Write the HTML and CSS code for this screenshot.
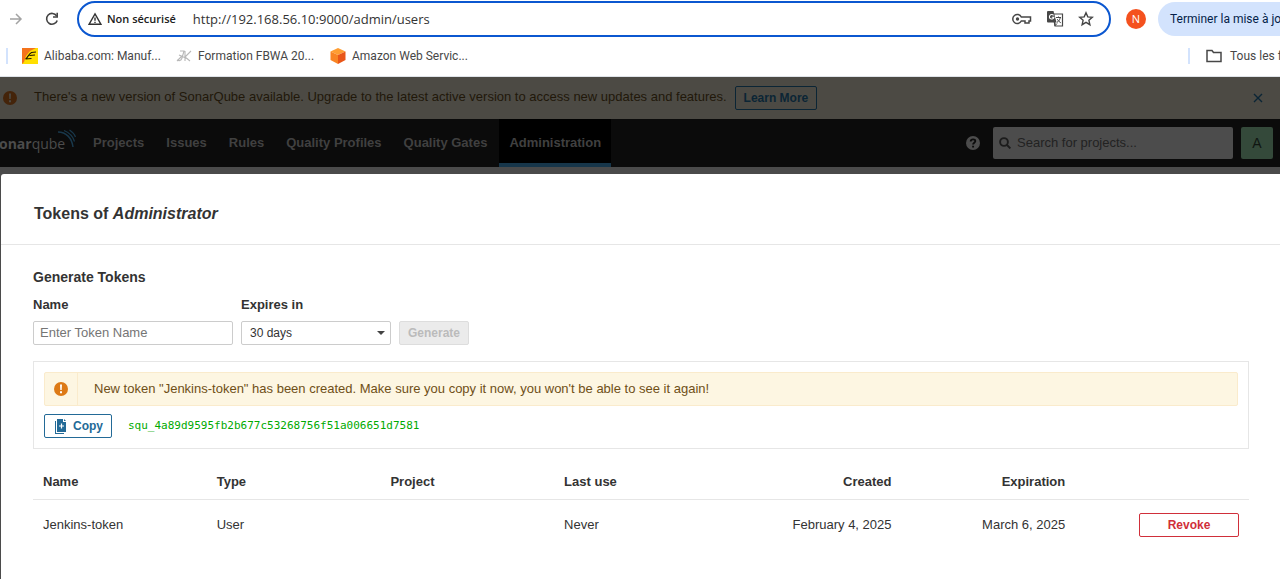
FILE: index.html
```html
<!DOCTYPE html>
<html lang="en">
<head>
<meta charset="utf-8">
<meta name="viewport" content="width=device-width, initial-scale=1">
<title>Users - Administration</title>
<link rel="stylesheet" href="styles.css">
</head>
<body>
<header class="browser">
  <div class="toolbar">
    <button class="icon-btn forward" aria-label="Forward"><svg width="16" height="16" viewBox="0 0 16 16" fill="none" stroke="#a3a3a3" stroke-width="1.5"><path d="M2 8h11M8 3l5 5-5 5"/></svg></button>
    <button class="icon-btn reload" aria-label="Reload"><svg width="16" height="16" viewBox="0 0 16 16"><path d="M12.6 4.9A5.4 5.4 0 1 0 13.2 9.4" fill="none" stroke="#444" stroke-width="1.6"/><path d="M14 1.8v5H9V5.300h3.400V1.800z" fill="#444"/></svg></button>
    <div class="address">
      <svg width="14" height="14" viewBox="0 0 14 14" fill="none" stroke="#333" stroke-width="1.400"><path d="M7 1.800 13 12.300H1z"/><path d="M7 5.500v3.300M7 9.800v1.200"/></svg>
      <span class="insecure">Non sécurisé</span>
      <input class="url" aria-label="Address" value="http://192.168.56.10:9000/admin/users">
      <button class="icon-btn" aria-label="Passwords"><svg width="20" height="14" viewBox="0 0 20 14" fill="none" stroke="#474747" stroke-width="1.500"><path d="M9.300 5A4.500 4.500 0 1 0 9.300 9H13v2h4V9h1.500V5z"/><circle cx="5.500" cy="7" r="1.700" fill="#474747" stroke="none"/></svg></button>
      <button class="icon-btn" aria-label="Translate"><svg width="18" height="18" viewBox="0 0 18 18"><path d="M7 4h9.500v12H9z" fill="#fff" stroke="#474747" stroke-width="1.200"/><path d="M2 1h5.500l3 11.500H2a1 1 0 0 1-1-1V2a1 1 0 0 1 1-1z" fill="#474747"/><path d="M7.600 5.400A2.300 2.300 0 1 0 8 7.200H5.800" fill="none" stroke="#fff" stroke-width="1.100"/><path d="M10 7.500h5M12.500 6.500v1M14.300 7.500c-.4 2.500-1.800 4-3.500 5M11.300 9.200c.8 1.600 2 2.700 3.500 3.600M9 12.500v3.200l2-2.200" fill="none" stroke="#474747" stroke-width="1"/></svg></button>
      <button class="icon-btn" aria-label="Bookmark"><svg width="16" height="16" viewBox="0 0 16 16" fill="none" stroke="#444" stroke-width="1.400"><path d="m8 1.800 1.800 4.100 4.500.4-3.400 3 1 4.400L8 11.400l-3.900 2.300 1-4.400-3.400-3 4.500-.4z"/></svg></button>
    </div>
    <button class="profile" aria-label="Profile">N</button>
    <button class="update">Terminer la mise à jour</button>
  </div>
  <nav class="bookmarks" aria-label="Bookmarks">
    <span class="divider"></span>
    <a href="#" class="bookmark"><svg width="16" height="16" viewBox="0 0 16 16"><path fill="#ffdf00" d="M0 0h16v16H0z"/><path d="M0 0h14L8 3 4 8 2 14 0 16z" fill="#f4731c"/><path d="M3.500 11c2-1 3-5 6-6.500L14 4M7.500 7.500 13 7M3.500 11l6-.5" fill="none" stroke="#201500" stroke-width="1.100"/></svg>Alibaba.com: Manuf...</a>
    <a href="#" class="bookmark"><svg width="16" height="16" viewBox="0 0 16 16" fill="none" stroke="#b8b8b8" stroke-width="1.100"><path d="M4 3h4l-2 7c-1 3-3 3-5 2M9 3v10M15 3 9 9l5 4M3 7l9 4M1 13l5-5"/></svg>Formation FBWA 20...</a>
    <a href="#" class="bookmark"><svg width="16" height="16" viewBox="0 0 16 16"><path fill="#ff9d32" d="m8 0 7.500 3.500L8 7 .5 3.500z"/><path fill="#f98424" d="M.5 3.500 8 7v9L.5 12z"/><path fill="#e95618" d="M15.500 3.500 8 7v9l7.500-4z"/></svg>Amazon Web Servic...</a>
    <span class="spacer"></span>
    <span class="divider"></span>
    <a href="#" class="bookmark all"><svg width="16" height="14" viewBox="0 0 16 14" fill="none" stroke="#474747" stroke-width="1.500"><path d="M1 1.500h5l1.500 2H15v9H1z"/></svg>Tous les favoris</a>
  </nav>
</header>

<div class="banner">
  <svg class="banner-icon" width="14" height="14" viewBox="0 0 14 14"><circle cx="7" cy="7" r="7" fill="#44240a"/><path d="M6 2.500h2L7.700 8H6.300zM6 9.300h2v2H6z" fill="#4c4a44"/></svg>
  <span class="banner-text">There's a new version of SonarQube available. Upgrade to the latest active version to access new updates and features.</span>
  <button class="btn learn">Learn More</button>
  <button class="icon-btn close" aria-label="Dismiss"><svg width="10" height="10" viewBox="0 0 10 10" stroke="#0b2535" stroke-width="1.400"><path d="m1 1 8 8M9 1 1 9"/></svg></button>
</div>

<div class="navbar">
  <a href="#" class="brand" aria-label="SonarQube"><span class="brand-name"><b>sonar</b>qube</span><svg width="20" height="20" viewBox="0 0 20 20" fill="none" stroke="#19384b"><path d="M1 3c8 0 14 6 15 15" stroke-width="1.500"/><path d="M7 1.500c5 2 9 6 10.500 11M12.500 1c3 2 5 4 6 7" stroke-width="1.200"/></svg></a>
  <nav class="menu" aria-label="Main">
    <a href="#">Projects</a><a href="#">Issues</a><a href="#">Rules</a><a href="#">Quality Profiles</a><a href="#">Quality Gates</a><a href="#" class="active">Administration</a>
  </nav>
  <button class="icon-btn help" aria-label="Help"><svg width="14" height="14" viewBox="0 0 14 14"><circle cx="7" cy="7" r="7" fill="#4c4c4c"/><path d="M4.700 5.500C4.800 2.600 9.500 2.700 9.300 5.300 9.200 6.700 7.100 6.800 7.100 8.500M7.100 9.700v1.900" fill="none" stroke="#0b0b0b" stroke-width="1.900"/></svg></button>
  <label class="search"><svg width="12" height="12" viewBox="0 0 12 12" fill="none" stroke="#1c1c1c" stroke-width="1.900"><circle cx="5" cy="5" r="3.900"/><path d="m8 8 3.400 3.400"/></svg><input type="search" aria-label="Search for projects" placeholder="Search for projects..."></label>
  <button class="avatar">A</button>
</div>

<div class="backdrop">
  <main class="modal" role="dialog" aria-labelledby="title">
    <header class="modal-head"><h1 id="title">Tokens of <em>Administrator</em></h1></header>
    <div class="modal-body">
      <h2>Generate Tokens</h2>
      <form class="form">
        <div class="field name"><label for="token-name">Name</label><input id="token-name" placeholder="Enter Token Name"></div>
        <div class="field expires"><label for="expires">Expires in</label>
          <div class="select-wrap"><select id="expires"><option>30 days</option></select></div></div>
        <button class="btn generate" disabled>Generate</button>
      </form>
      <section class="panel">
        <div class="alert">
          <div class="alert-icon"><svg width="14" height="14" viewBox="0 0 14 14"><circle cx="7" cy="7" r="7" fill="#dd7a16"/><path d="M6 2.500h2L7.700 8H6.300zM6 9.300h2v2H6z" fill="#fff"/></svg></div>
          <p>New token "Jenkins-token" has been created. Make sure you copy it now, you won't be able to see it again!</p>
        </div>
        <div class="token">
          <button class="btn copy"><svg width="14" height="16" viewBox="0 0 14 16"><path d="M4 1h6v3h3v10H4z" fill="#236a97"/><path d="M11 1l2 2h-2zM2 3h1v12h8v1H2z" fill="#236a97"/><path d="M8.500 5.500v5M6 8h5" stroke="#fff" stroke-width="1.200"/></svg>Copy</button>
          <code>squ_4a89d9595fb2b677c53268756f51a006651d7581</code>
        </div>
      </section>
      <table>
        <thead><tr><th>Name</th><th>Type</th><th>Project</th><th>Last use</th><th class="num">Created</th><th class="num">Expiration</th><th></th></tr></thead>
        <tbody><tr><td>Jenkins-token</td><td>User</td><td></td><td>Never</td><td class="num">February 4, 2025</td><td class="num">March 6, 2025</td><td class="num"><button class="btn revoke">Revoke</button></td></tr></tbody>
      </table>
    </div>
  </main>
</div>
</body>
</html>
```

FILE: styles.css
```css
* { box-sizing: border-box; }
body {
  margin: 0;
  min-height: 100vh;
  display: flex;
  flex-direction: column;
  overflow: hidden;
  font: 13px/20px "Liberation Sans", Arial, sans-serif;
  color: #333;
}
button, input, select { font: inherit; color: inherit; }
button { cursor: pointer; }
a { color: inherit; text-decoration: none; }
svg { display: block; flex: none; }
h1, h2, p { margin: 0; }
.icon-btn { border: 0; padding: 0; background: none; flex: none; }

/* Browser chrome */
.browser {
  background: #fff;
  border-bottom: 1px solid #dfe3e8;
  font: 12px/16px "Open Sans", "Noto Sans", sans-serif;
}
.toolbar { display: flex; align-items: center; height: 38px; padding-left: 8px; }
.reload { margin: 0 17px 0 20px; }
.address {
  flex: 1;
  display: flex;
  align-items: center;
  height: 36px;
  border: 2px solid #0b57d0;
  border-radius: 18px;
  padding: 0 15px 0 9px;
}
.insecure { margin: 0 17px 0 5px; font-weight: 600; font-size: 11px; color: #202020; white-space: nowrap; }
.url { flex: 1; min-width: 0; border: 0; padding: 0; outline: 0; font-size: 13px; background: none; }
.address .icon-btn { margin-left: 14px; }
.profile {
  width: 20px; height: 20px; margin: 0 12px 0 15px; padding: 0;
  border: 0; border-radius: 50%; background: #f4511e; color: #fff; font-size: 11px;
}
.update {
  flex: none; width: 122px; height: 34px; padding: 0 0 0 12px; overflow: hidden;
  border: 0; border-radius: 17px 0 0 17px; background: #d3e3fd; color: #041e49;
  font-family: Roboto, sans-serif; text-align: left; white-space: nowrap;
}
.bookmarks {
  display: flex; align-items: center; height: 38px; padding: 0 0 2px 6px;
  font-family: Roboto, sans-serif; color: #474747;
}
.divider { width: 2px; height: 16px; background: #d3e3fd; }
.bookmark { display: flex; align-items: center; gap: 6px; margin-left: 14px; width: 140px; white-space: nowrap; }
.spacer { flex: 1; }
.all { width: 74px; margin-left: 16px; gap: 8px; overflow: hidden; }

/* Update notice */
.banner {
  display: flex; align-items: center; height: 42px; padding: 0 17px 0 3px;
  background: #4c4a44; color: #21180a;
}
.banner-text { margin: 0 8px 2px 17px; }
.btn {
  display: inline-flex; align-items: center; justify-content: center;
  height: 24px; padding: 0 8px; border: 1px solid; border-radius: 2px;
  background: none; font-size: 12px; font-weight: bold;
}
.learn { color: #0b2535; }
.close { margin-left: auto; }

/* Main navigation */
.navbar { display: flex; align-items: center; height: 48px; padding-right: 7px; background: #0b0b0b; color: #404040; }
.brand { display: flex; align-items: center; width: 83px; overflow: hidden; }
.brand-name { margin: 2px -8px 0 -8px; font: 14px/20px "Open Sans", sans-serif; color: #4c4c4c; }
.brand svg { margin-bottom: 9px; }
.menu { display: flex; gap: 2px; align-self: stretch; font-weight: bold; }
.menu a { display: flex; align-items: center; padding: 4px 10px 0; border-bottom: 4px solid transparent; white-space: nowrap; }
.menu .active { background: #000; border-color: #17364a; }
.help { margin: 0 13px 0 auto; }
.search {
  display: flex; align-items: center; gap: 6px; width: 240px; height: 32px; padding: 0 6px;
  background: #4c4c4c; border-radius: 2px;
}
.search input { flex: 1; min-width: 0; padding: 0; border: 0; background: none; }
.search input::placeholder { color: #222; opacity: 1; }
.avatar { width: 32px; height: 32px; margin-left: 8px; padding: 0; border: 0; border-radius: 2px; background: #34493a; color: #101612; font-size: 14px; }

/* Token dialog */
.backdrop { flex: 1; display: flex; padding: 7px 0 0 1px; background: #4b4b4b; }
.modal { flex: 1; min-width: 0; background: #fff; border-radius: 3px 0 0 0; }
.modal-head { padding: 30px 33px 20px; border-bottom: 1px solid #e6e6e6; }
h1 { font-size: 16px; line-height: 20px; }
.modal-body { padding: 22px 31px 30px 32px; }
h2 { font-size: 14px; line-height: 20px; }
.form { display: flex; align-items: flex-end; gap: 8px; margin-top: 8px; }
.field { display: flex; flex-direction: column; gap: 6px; }
.field label { font-weight: bold; }
.name { width: 200px; }
.expires { width: 150px; }
.field input, .field select {
  width: 100%; height: 24px; padding: 0 6px 2px;
  border: 1px solid #ccc; border-radius: 2px; background: #fff;
}
.field input::placeholder { color: #757575; opacity: 1; }
.field select { appearance: none; padding: 0 8px; font-size: 12px; }
.select-wrap { position: relative; display: flex; }
.select-wrap::after {
  content: ""; position: absolute; right: 6px; top: 10px;
  border: 4px solid transparent; border-top-color: #444; border-bottom: 0;
}
.generate { background: #ebebeb; border-color: #ddd; color: #bbb; }
.panel { margin-top: 16px; padding: 10px; border: 1px solid #e6e6e6; }
.alert { display: flex; align-items: stretch; height: 34px; border: 1px solid #faebcc; border-radius: 2px; background: #fdf6e2; color: #6f4f17; }
.alert-icon { display: flex; align-items: center; justify-content: center; width: 33px; border-right: 1px solid #faebcc; }
.alert p { padding: 6px 16px; }
.token { display: flex; align-items: center; gap: 16px; margin-top: 8px; }
.copy { gap: 6px; color: #236a97; }
code { font: 11px/20px "DejaVu Sans Mono", monospace; color: #0a0; }
table { width: 100%; margin-top: 14px; table-layout: fixed; border-collapse: collapse; }
th, td { padding: 9px 10px 7px; text-align: left; white-space: nowrap; }
th { border-bottom: 1px solid #e6e6e6; }
td { padding-top: 13px; }
.num { text-align: right; }
.revoke { width: 100px; color: #d02f3a; }
```
